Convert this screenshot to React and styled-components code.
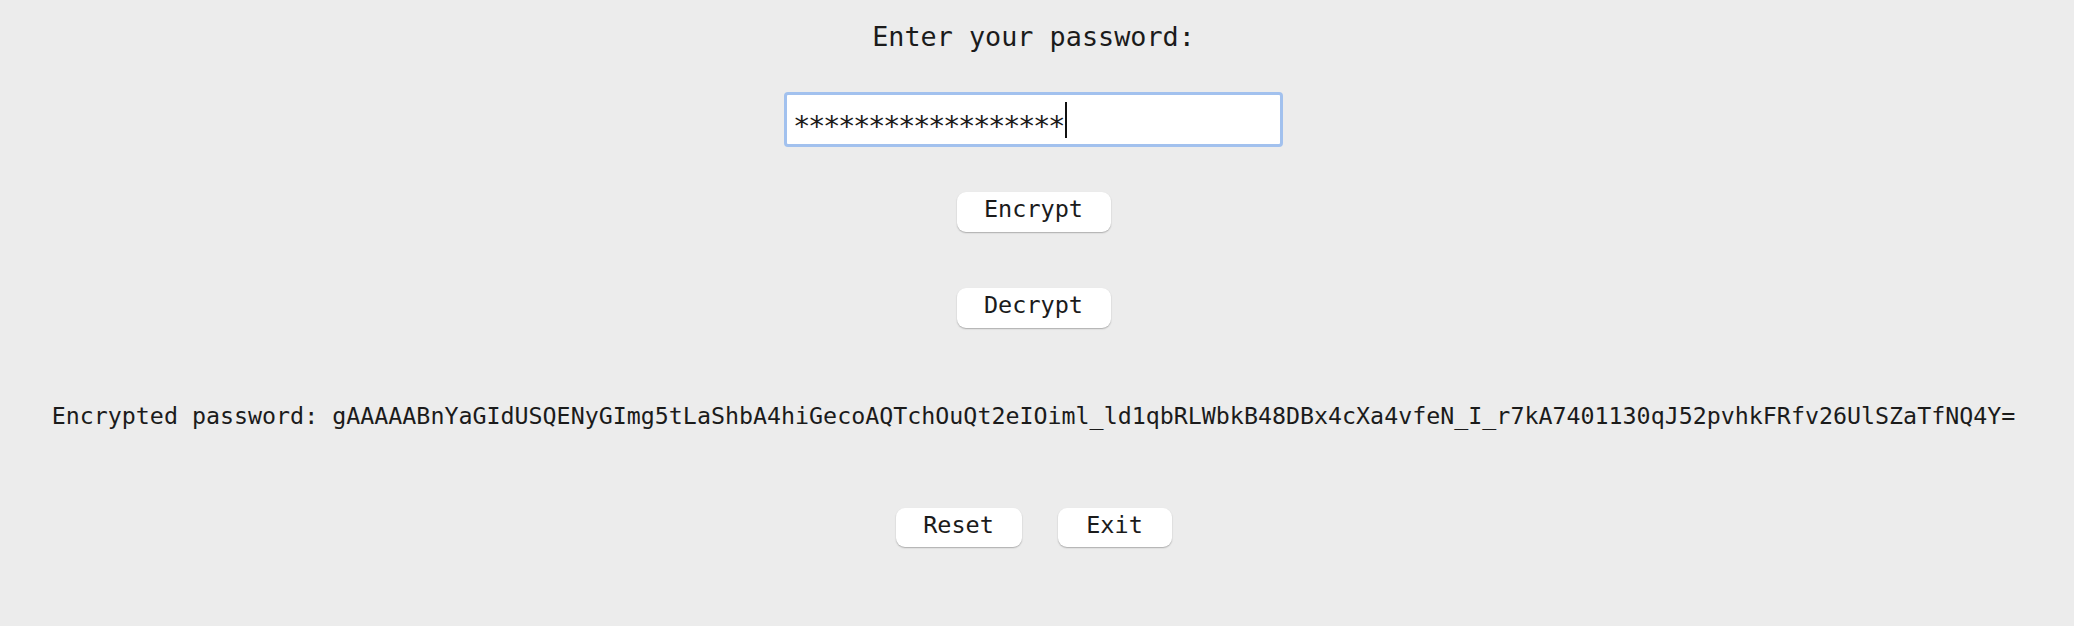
import styled, { createGlobalStyle } from "styled-components";

const GlobalStyle = createGlobalStyle`
  html, body {
    margin: 0;
    padding: 0;
    background: #ececec;
  }
  body {
    font-family: "DejaVu Sans Mono", "Liberation Mono", monospace;
    color: #1b1b1b;
  }
`;

const Page = styled.div`
  display: flex;
  flex-direction: column;
  align-items: center;
  min-height: 100vh;
  box-sizing: border-box;
  padding: 21px 7px 0 0;
`;

const Title = styled.div`
  font-size: 26.8px;
  line-height: 32px;
  height: 32px;
`;

const Field = styled.div`
  margin-top: 39px;
  width: 499px;
  height: 55px;
  box-sizing: border-box;
  border: 3px solid #a2c1ee;
  border-radius: 4px;
  background: #ffffff;
  display: flex;
  align-items: center;
  padding-left: 6px;
  font-size: 29px;
`;

// bigger asterisks squeezed back onto a 15px pitch
const Stars = styled.span`
  line-height: 1;
  letter-spacing: -2.46px;
  transform: translateY(7px);
`;

const Caret = styled.span`
  margin-left: 2px;
  width: 2px;
  height: 36px;
  background: #111;
`;

const Button = styled.button`
  margin-top: ${(p) => p.$top || 0}px;
  width: ${(p) => p.$width}px;
  height: ${(p) => p.$height || 40}px;
  box-sizing: border-box;
  padding: 0 0 6px;
  border: none;
  border-radius: 9px;
  background: #ffffff;
  box-shadow: 0 1px 1.5px rgba(0, 0, 0, 0.28);
  font-family: inherit;
  font-size: 23.5px;
  line-height: 34px;
  color: #1b1b1b;
  cursor: pointer;
`;

const Output = styled.div`
  margin-top: 74px;
  font-size: 23.3px;
  line-height: 28px;
  white-space: nowrap;
`;

const Actions = styled.div`
  margin-top: 78px;
  display: flex;
  gap: 36px;
`;

const token =
  "gAAAAABnYaGIdUSQENyGImg5tLaShbA4hiGecoAQTchOuQt2eIOiml_ld1qbRLWbkB48DBx4cXa4vfeN_I_r7kA7401130qJ52pvhkFRfv26UlSZaTfNQ4Y=";

export default function App() {
  return (
    <>
      <GlobalStyle />
      <Page>
        <Title>Enter your password:</Title>
        <Field>
          <Stars>******************</Stars>
          <Caret />
        </Field>
        <Button $top={45} $width={154}>Encrypt</Button>
        <Button $top={56} $width={154}>Decrypt</Button>
        <Output>Encrypted password: {token}</Output>
        <Actions>
          <Button $width={126} $height={39}>Reset</Button>
          <Button $width={114} $height={39}>Exit</Button>
        </Actions>
      </Page>
    </>
  );
}
